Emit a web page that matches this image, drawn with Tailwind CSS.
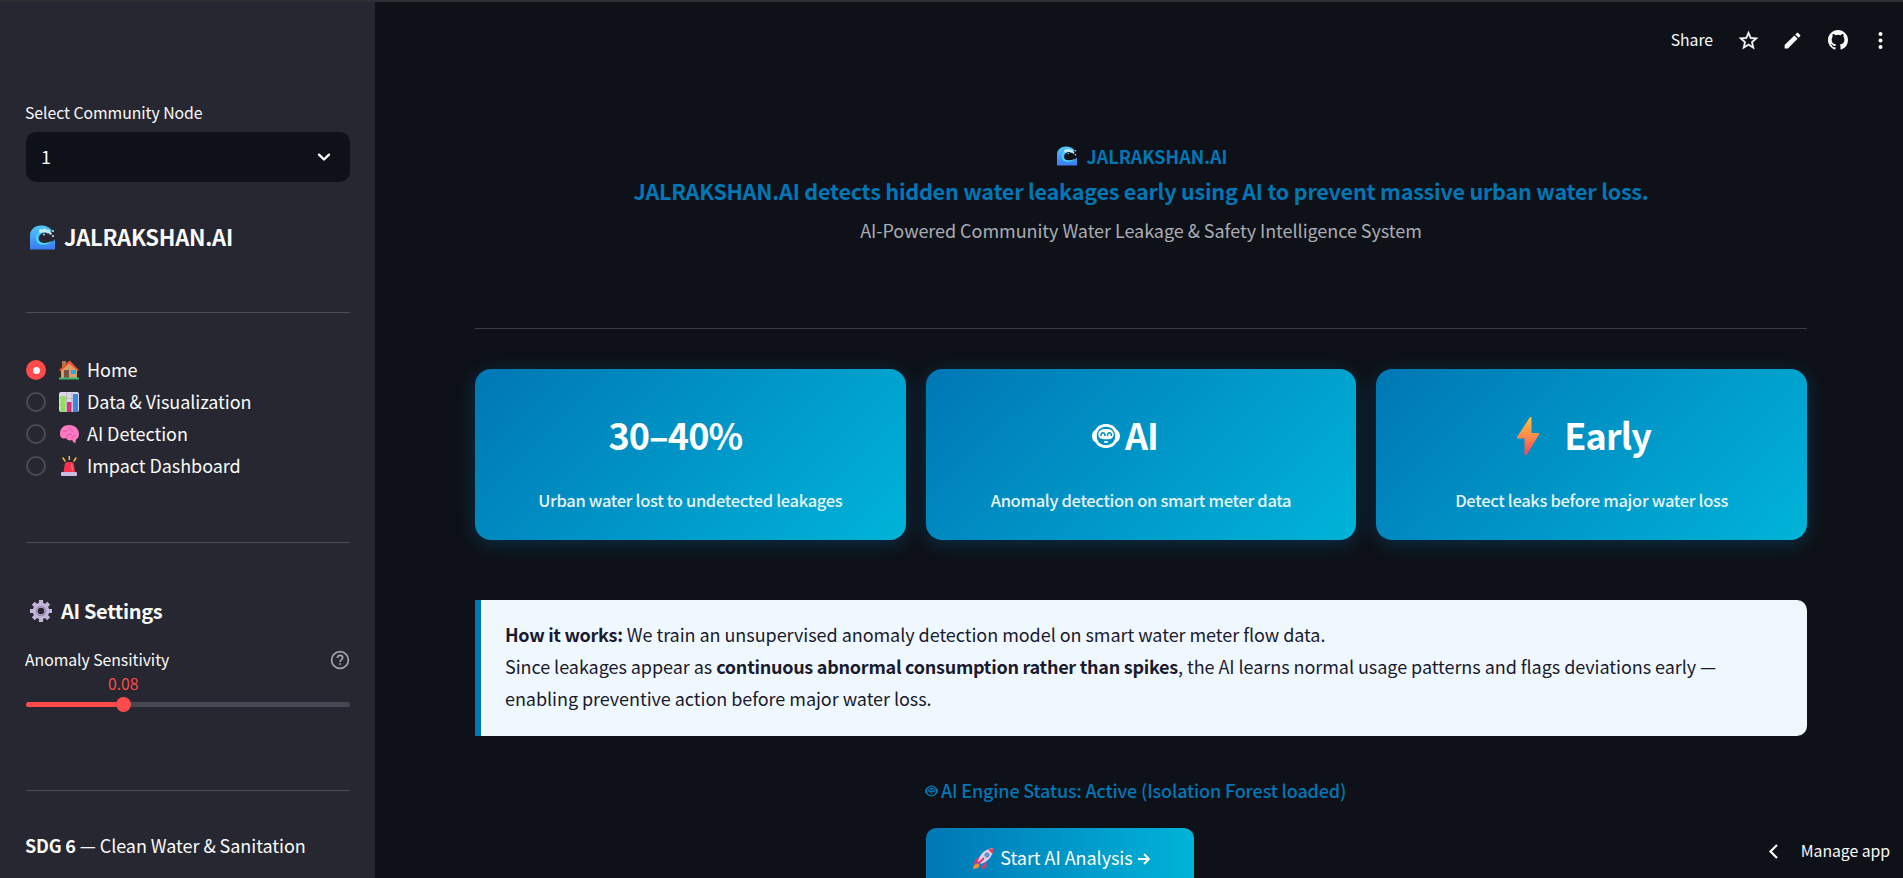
<!DOCTYPE html>
<html lang="en">
<head>
  <meta charset="UTF-8">
  <meta name="viewport" content="width=device-width, initial-scale=1.0">
  <title>JALRAKSHAN.AI</title>
  <script src="https://cdn.jsdelivr.net/npm/@tailwindcss/browser@4"></script>
</head>
<body class="bg-[#0e1117] text-[#fafafa] font-['Noto_Sans_CJK_SC',sans-serif] text-[18px] leading-8 tracking-[-0.05px] h-screen overflow-hidden whitespace-nowrap">

  <!-- Shared icons -->
  <svg class="absolute size-0">
    <defs>
      <linearGradient id="sea" x1="0" y1="0" x2="0" y2="1"><stop offset="0" stop-color="#52c8fa"/><stop offset="1" stop-color="#3b7bf0"/></linearGradient>
    </defs>
    <symbol id="wave" viewBox="0 0 25 24">
      <path d="M0 24V10C0 4 5 0 11 0c5 0 9 2 11 5l-2 3c-4-2-10-1-11 4-1 4 3 7 7 6 4 0 7-2 9-4v10z" fill="url(#sea)"/>
      <path d="M20 7c-8-2-13 2-12 6 1 5 8 6 15 2-5 6-17 6-17-2 0-7 7-10 14-6z" fill="#4bd5f5"/>
      <g fill="#c5f0fb"><circle cx="11" cy="5.500" r="2"/><circle cx="14.500" cy="5" r="2"/><circle cx="18" cy="6" r="2"/><circle cx="20.500" cy="8" r="1.200"/><circle cx="14" cy="9" r=".9"/><circle cx="23" cy="5.500" r="1"/><circle cx="23" cy="10.500" r="1"/></g>
    </symbol>
    <symbol id="robot" viewBox="0 0 28 24">
      <path d="M14 0c5 0 8.500 2.300 10.300 5.500C27 7 28 9.500 28 12s-1 5-3.700 6.500C22.500 21.700 19 24 14 24S5.500 21.700 3.700 18.500C1 17 0 14.500 0 12s1-5 3.700-6.500C5.500 2.300 9 0 14 0zm0 2.700C8.500 2.700 4.800 6.500 4.800 12s3.700 9.300 9.200 9.300 9.200-3.800 9.200-9.300S19.500 2.700 14 2.700z" fill="currentColor" fill-rule="evenodd"/>
      <path d="M14 5c5 0 7.700 2 7.700 5.500 0 3-2.200 4.700-5.200 4.700h-5c-3 0-5.200-1.700-5.200-4.700C6.300 7 9 5 14 5zm-5.800 7h1.600c0-1.700.4-2.500 1.200-2.500s1.200.8 1.200 2.500h1.600c0-2.700-1-4-2.800-4s-2.800 1.300-2.800 4zm6.500 0h1.500c0-1.700.4-2.500 1.200-2.500s1.200.8 1.200 2.500h1.600c0-2.700-1-4-2.800-4s-2.700 1.300-2.700 4z" fill="currentColor" fill-rule="evenodd"/>
      <rect x="12" y="17" width="4" height="1.800" rx=".9" fill="currentColor"/>
    </symbol>
  </svg>

  <div class="h-0.5 bg-[#2e2f33]"></div>

  <div class="flex h-[876px]">
    <!-- Sidebar -->
    <aside class="w-[375px] shrink-0 bg-[#262730] pl-[26px] pr-[25px] pt-[96px]">
      <label class="-ml-px block h-[34px] text-[15.8px] leading-[29px]">Select Community Node</label>
      <div class="flex h-[50px] items-center justify-between rounded-[10px] bg-[#0e1117] pl-[15px] pr-[19px]">
        <span class="pb-0.5">1</span>
        <svg class="size-[14px]" viewBox="0 0 14 14" fill="none" stroke="currentColor" stroke-width="2.400" stroke-linecap="round" stroke-linejoin="round"><path d="M2 4.700l5 4.800 5-4.800"/></svg>
      </div>

      <div class="mt-[39px] flex h-8 items-center pl-1">
        <svg class="size-[25px]"><use href="#wave"/></svg>
        <h2 class="ml-[9px] pb-[3px] text-[22px] font-semibold tracking-[-0.27px]">JALRAKSHAN.AI</h2>
      </div>
      <hr class="mt-[59px] border-[#4c4d56]">

      <nav class="mt-[41px] h-32">
        <div class="flex h-8 items-center">
          <span class="flex size-5 items-center justify-center rounded-full bg-[#ff4b4b]"><span class="size-[7px] rounded-full bg-[#f5f5f5]"></span></span>
          <svg class="ml-[13px] size-5" viewBox="0 0 20 20">
            <path d="M3 1h4v7H3z" fill="#b5754a"/><path d="M2 9l9-8 7 8v10H2z" fill="#d9a066"/>
            <path d="M0 10L10.500.5 20 10l-1.200 1.300L10.500 3.500 1.200 11.300z" fill="#ee4f2e"/>
            <path d="M5 10h5v8H5z" fill="#76514a"/><path d="M12 10h5v4h-5z" fill="#29a8ee"/><path d="M0 17.500h20V19.500H0z" fill="#3cb96a"/>
          </svg>
          <span class="ml-2 pb-0.5">Home</span>
        </div>
        <div class="flex h-8 items-center">
          <span class="size-5 rounded-full border-2 border-[#4a4b54] bg-[#262730]"></span>
          <svg class="ml-[13px] size-5" viewBox="0 0 20 20">
            <rect width="20" height="20" rx="2" fill="#ddd6e6"/><path d="M0 6.500h20M0 13h20M7.500 0v20M13 0v20" stroke="#b3a9c2" stroke-width=".7"/>
            <path d="M1.500 4H6.500V20H1.500z" fill="#90df5a"/><path d="M8 10h4.500v10H8z" fill="#d8327c"/><path d="M14 2h5v18h-5z" fill="#3689dd"/>
          </svg>
          <span class="ml-2 pb-0.5">Data &amp; Visualization</span>
        </div>
        <div class="flex h-8 items-center">
          <span class="size-5 rounded-full border-2 border-[#4a4b54] bg-[#262730]"></span>
          <svg class="ml-[13px] size-5" viewBox="0 0 20 20">
            <path d="M1 10C1 4 5 1 10 1c6 0 10 4 10 9 0 3-1.500 5-3 5.500L16.500 19l-2-.5L13 16c-3 1-5 0-6-2-3 1.500-6 0-6-4z" fill="#fb79c0"/>
            <path d="M4 8c2-2 4 0 5-2M10 4c2 0 1 3 4 3M8 13c0-3 3-3 5-2M13 15c0-3 2-3 4-4" fill="none" stroke="#d94b9c" stroke-width=".9"/>
          </svg>
          <span class="ml-2 pb-0.5">AI Detection</span>
        </div>
        <div class="flex h-8 items-center">
          <span class="size-5 rounded-full border-2 border-[#4a4b54] bg-[#262730]"></span>
          <svg class="ml-[13px] size-5" viewBox="0 0 20 20">
            <path d="M10.300.5v3M4 2l2 3M17 2l-2 3" stroke="#f6bd4b" stroke-width="1.500" stroke-linecap="round"/>
            <path d="M4.500 16l1.300-8c.4-1.600 1.400-2 3-2h3c1.600 0 2.600.4 3 2l1.300 8z" fill="#f7334d"/><path d="M12.500 7.500l1 7" stroke="#ff8590"/><rect x="2" y="16" width="16" height="4" rx="1" fill="#cdbbe3"/>
          </svg>
          <span class="ml-2 pb-0.5">Impact Dashboard</span>
        </div>
      </nav>
      <hr class="mt-[60px] border-[#4c4d56]">

      <div class="mt-[52px] flex h-8 items-center pl-1">
        <svg class="size-[22px]" viewBox="-11 -11 22 22">
          <g fill="none" stroke="#c4b6d8"><circle r="5.800" stroke-width="5"/>
          <path d="M0-11V-7M0 7V11M-11 0H-7M7 0H11M-7.700-7.700L-5-5M5 5L7.700 7.700M-7.700 7.700L-5 5M5-5L7.700-7.700" stroke-width="4.200"/></g>
          <circle r="4.500" fill="none" stroke="#9a8cb0" stroke-width="1.500"/>
        </svg>
        <h3 class="ml-[9px] text-[20px] font-semibold tracking-[-0.33px]">AI Settings</h3>
      </div>
      <div class="mt-[18px] flex h-[30px] items-center justify-between">
        <span class="-ml-px text-[15.800px]">Anomaly Sensitivity</span>
        <svg class="size-5" viewBox="0 0 20 20" fill="none" stroke="#a3a4a9" stroke-width="1.700"><circle cx="10" cy="10" r="8.400"/><path d="M7.300 8c0-1.700 1.200-2.700 2.700-2.700s2.700.9 2.700 2.400c0 2-2.600 2-2.600 4.200"/><path d="M9.200 14h1.800"/></svg>
      </div>
      <div class="h-[27px] pl-[82px] text-[15.800px] leading-[17px] text-[#ff4b4b]">0.08</div>
      <div class="flex h-[5px] items-center rounded-full bg-[#474853]">
        <div class="h-[5px] w-[90px] rounded-l-full bg-[#ff4b4b]"></div>
        <div class="size-[15px] shrink-0 rounded-full bg-[#ff4b4b]"></div>
      </div>
      <hr class="mt-[83px] border-[#4c4d56]">
      <p class="-ml-px mt-[38px]"><b class="font-semibold tracking-[-0.2px]">SDG 6</b> — Clean Water &amp; Sanitation</p>
    </aside>

    <!-- Main -->
    <main class="relative grow pl-[100px] pr-24">
      <div class="absolute right-0 top-0 flex h-[76px] items-center text-[15.800px]">
        <span>Share</span>
        <svg class="ml-[24px] size-[23px]" viewBox="0 0 24 24" fill="currentColor" stroke="currentColor" stroke-width=".3"><path d="M22 9.240l-7.190-.62L12 2 9.190 8.630 2 9.240l5.460 4.730L5.820 21 12 17.270 18.180 21l-1.630-7.030L22 9.240zM12 15.400l-3.760 2.270 1-4.280-3.320-2.880 4.380-.38L12 6.100l1.710 4.040 4.380.38-3.320 2.880 1 4.280L12 15.400z"/></svg>
        <svg class="ml-[22px] size-[21px]" viewBox="0 0 24 24" fill="currentColor"><path d="M3 17.250V21h3.750L17.810 9.940l-3.750-3.750L3 17.250zM20.710 7.040a1 1 0 0 0 0-1.410l-2.340-2.340a1 1 0 0 0-1.410 0l-1.830 1.830 3.750 3.750 1.830-1.830z"/></svg>
        <svg class="ml-[25px] size-5" viewBox="0 0 16 16" fill="currentColor"><path d="M8 0C3.580 0 0 3.580 0 8c0 3.540 2.290 6.530 5.470 7.590.4.070.55-.17.55-.38 0-.19-.01-.82-.01-1.490-2.010.37-2.530-.49-2.690-.94-.09-.23-.48-.94-.82-1.130-.28-.15-.68-.52-.01-.53.630-.01 1.080.58 1.230.82.720 1.210 1.870.87 2.330.66.070-.52.280-.87.510-1.070-1.780-.2-3.640-.89-3.640-3.950 0-.87.310-1.590.82-2.150-.08-.2-.36-1.020.08-2.120 0 0 .67-.21 2.200.82a7.600 7.600 0 0 1 4 0c1.530-1.040 2.200-.82 2.200-.82.440 1.100.160 1.920.080 2.120.510.560.820 1.270.820 2.150 0 3.070-1.870 3.750-3.650 3.950.290.250.540.730.540 1.480 0 1.070-.01 1.930-.01 2.200 0 .210.150.460.550.380A8 8 0 0 0 16 8c0-4.420-3.580-8-8-8z"/></svg>
        <svg class="ml-[22px] mr-3 size-[21px]" viewBox="0 0 21 21" fill="currentColor"><circle cx="10.500" cy="4" r="2"/><circle cx="10.500" cy="10.500" r="2"/><circle cx="10.500" cy="17" r="2"/></svg>
      </div>

      <div class="flex flex-col items-center pt-[138px] text-[#0077b6]">
        <div class="flex h-8 items-center gap-[9px] pl-[3px]">
          <svg class="size-5"><use href="#wave"/></svg>
          <h1 class="text-[18px] font-bold tracking-normal">JALRAKSHAN.AI</h1>
        </div>
        <p class="mt-[3px] h-9 text-[21.600px] font-bold leading-8 tracking-[-0.235px]">JALRAKSHAN.AI detects hidden water leakages early using AI to prevent massive urban water loss.</p>
        <p class="mt-[3px] text-[#a9adb3]">AI-Powered Community Water Leakage &amp; Safety Intelligence System</p>
      </div>
      <hr class="mt-[82px] border-[#3a3c41]">

      <div class="mt-10 grid grid-cols-3 gap-5 text-center text-white">
        <div class="h-[171px] rounded-2xl bg-[linear-gradient(135deg,#0077b6,#00b4d8)] pt-[40px] shadow-[0_4px_20px_rgba(0,119,182,0.3)]">
          <h2 class="flex h-[50px] items-center justify-center pr-[30px] text-[36px] font-semibold tracking-[-0.9px]">30–40%</h2>
          <p class="mt-[25px] text-[16.500px] font-medium tracking-[-0.32px] opacity-90">Urban water lost to undetected leakages</p>
        </div>
        <div class="h-[171px] rounded-2xl bg-[linear-gradient(135deg,#0077b6,#00b4d8)] pt-[40px] shadow-[0_4px_20px_rgba(0,119,182,0.3)]">
          <h2 class="flex h-[50px] items-center justify-center gap-[5px] pr-[32px] text-[36px] font-semibold tracking-[-0.9px]"><svg class="mt-1 h-6 w-7"><use href="#robot"/></svg>AI</h2>
          <p class="mt-[25px] text-[16.500px] font-medium tracking-[-0.32px] opacity-90">Anomaly detection on smart meter data</p>
        </div>
        <div class="h-[171px] rounded-2xl bg-[linear-gradient(135deg,#0077b6,#00b4d8)] pt-[40px] shadow-[0_4px_20px_rgba(0,119,182,0.3)]">
          <h2 class="flex h-[50px] items-center justify-center gap-[25px] pr-[15px] text-[36px] font-semibold tracking-[-0.9px]">
            <svg class="mt-1 h-[38px] w-[22px]" viewBox="0 0 22 38"><defs><linearGradient id="bolt" x1="0" y1="0" x2="0" y2="1"><stop offset="0" stop-color="#ffbd3f"/><stop offset=".5" stop-color="#fb8d4c"/><stop offset="1" stop-color="#f2475c"/></linearGradient></defs><path d="M13 0h1.500v16H22v1.500L9.500 38H7.500V21.500H0V20z" fill="url(#bolt)"/></svg>Early</h2>
          <p class="mt-[25px] text-[16.500px] font-medium tracking-[-0.32px] opacity-90">Detect leaks before major water loss</p>
        </div>
      </div>

      <div class="mt-[60px] h-[136px] rounded-r-[10px] border-l-[6px] border-[#0077b6] bg-[#f0f8ff] pl-6 pt-[18px] text-[#1a1a2e]">
        <b class="font-semibold tracking-[-0.3px]">How it works:</b> We train an unsupervised anomaly detection model on smart water meter flow data.<br>
        Since leakages appear as <b class="font-semibold tracking-[-0.26px]">continuous abnormal consumption rather than spikes</b>, the AI learns normal usage patterns and flags deviations early —<br>
        enabling preventive action before major water loss.
      </div>

      <div class="ml-[451px] mt-[38px]">
        <div class="-ml-px flex h-8 items-center gap-[3px] font-medium tracking-[-0.16px] text-[#0077b6]"><svg class="mt-0.5 h-3 w-[13px]"><use href="#robot"/></svg>AI Engine Status: Active (Isolation Forest loaded)</div>
        <button class="mt-[22px] flex h-[60px] w-[268px] items-center justify-center rounded-[10px] bg-[linear-gradient(90deg,#0077b6,#00b4d8)] pl-[3px] text-white">
          <svg class="mr-1.5 size-[21px]" viewBox="0 0 21 21">
            <path d="M6 9L2 12l-1 4 5-2zM12 15l-3 4-1 2 5-1 1-6z" fill="#e8356d"/><path d="M5 15l-4 2-1 4 5-1 2-3z" fill="#f98c2d"/>
            <path d="M5 13C7 6 12 1 20 0c.500 7-4 13-12 16z" fill="#ddd3e8"/><path d="M15 1.500L20.500 0 19.500 6z" fill="#ef3a5c"/><circle cx="14" cy="7" r="2.200" fill="#4a9be8" stroke="#8375a5" stroke-width=".8"/><path d="M5 16l6-6" stroke="#e8356d" stroke-width="1.800"/>
          </svg>
          <span class="pb-0.5">Start AI Analysis</span>
          <svg class="ml-[5px] mt-0.5 size-3" viewBox="0 0 12 12" fill="none" stroke="currentColor" stroke-width="1.800"><path d="M0 6h10.500M6 1l5 5-5 5"/></svg>
        </button>
      </div>

      <div class="absolute bottom-0 right-0 flex h-[54px] items-center pr-[13px] text-[15.800px]">
        <svg class="mr-[22px] h-[15px] w-[11px]" viewBox="0 0 11 15" fill="none" stroke="currentColor" stroke-width="2.200"><path d="M9 1L2.500 7.500 9 14"/></svg>
        Manage app
      </div>
    </main>
  </div>
</body>
</html>
